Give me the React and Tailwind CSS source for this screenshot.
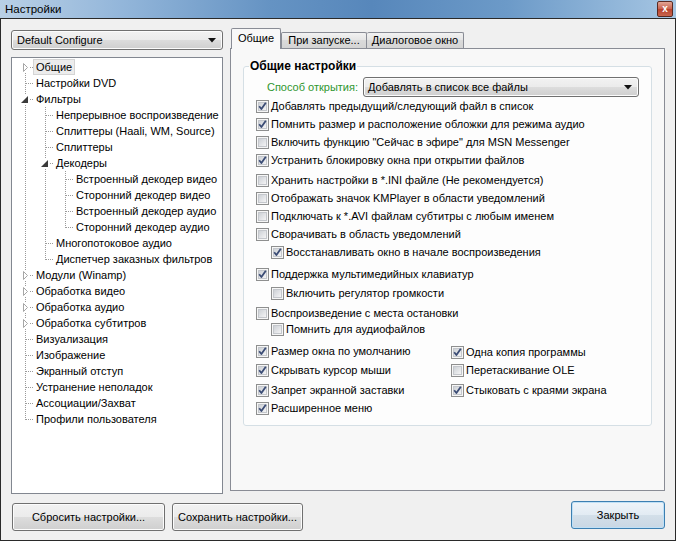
import React from 'react';

const tree = [
  { t: 'Общие', g: [], o: 'first', e: 'c', sel: true },
  { t: 'Настройки DVD', g: [], o: 'tee' },
  { t: 'Фильтры', g: [], o: 'tee', e: 'o' },
  { t: 'Непрерывное воспроизведение', g: ['pipe'], o: 'tee' },
  { t: 'Сплиттеры (Haali, WM, Source)', g: ['pipe'], o: 'tee' },
  { t: 'Сплиттеры', g: ['pipe'], o: 'tee' },
  { t: 'Декодеры', g: ['pipe'], o: 'tee', e: 'o' },
  { t: 'Встроенный декодер видео', g: ['pipe', 'pipe'], o: 'tee' },
  { t: 'Сторонний декодер видео', g: ['pipe', 'pipe'], o: 'tee' },
  { t: 'Встроенный декодер аудио', g: ['pipe', 'pipe'], o: 'tee' },
  { t: 'Сторонний декодер аудио', g: ['pipe', 'pipe'], o: 'elbow' },
  { t: 'Многопотоковое аудио', g: ['pipe'], o: 'tee' },
  { t: 'Диспетчер заказных фильтров', g: ['pipe'], o: 'elbow' },
  { t: 'Модули (Winamp)', g: [], o: 'tee', e: 'c' },
  { t: 'Обработка видео', g: [], o: 'tee', e: 'c' },
  { t: 'Обработка аудио', g: [], o: 'tee', e: 'c' },
  { t: 'Обработка субтитров', g: [], o: 'tee', e: 'c' },
  { t: 'Визуализация', g: [], o: 'tee' },
  { t: 'Изображение', g: [], o: 'tee' },
  { t: 'Экранный отступ', g: [], o: 'tee' },
  { t: 'Устранение неполадок', g: [], o: 'tee' },
  { t: 'Ассоциации/Захват', g: [], o: 'tee' },
  { t: 'Профили пользователя', g: [], o: 'elbow' },
];

const dot = { stroke: '#9a9a9a', strokeWidth: 1, strokeDasharray: '1 1' };

function Cell({ type, exp }) {
  return (
    <svg width="20" height="16" viewBox="0 0 20 16" className="shrink-0">
      {type === 'pipe' && <line x1="12.5" y1="0" x2="12.5" y2="16" style={dot} />}
      {type === 'tee' && <line x1="12.5" y1="0" x2="12.5" y2="16" style={dot} />}
      {type === 'elbow' && <line x1="12.5" y1="0" x2="12.5" y2="9" style={dot} />}
      {type === 'first' && <line x1="12.5" y1="8" x2="12.5" y2="16" style={dot} />}
      {type !== 'pipe' && <line x1="13" y1="8.5" x2="20" y2="8.5" style={dot} />}
      {exp && <rect x="8" y="3" width="9" height="11" fill="#ffffff" />}
      {exp === 'c' && (
        <polygon points="10.5,4.5 10.5,12.5 14.5,8.5" fill="#ffffff" stroke="#a6a6a6" strokeWidth="1" />
      )}
      {exp === 'o' && <polygon points="15,5 15,12 8,12" fill="#3a3a3a" />}
    </svg>
  );
}

function Check({ checked }) {
  return (
    <span className="relative flex h-[13px] w-[13px] shrink-0 items-center justify-center border border-[#8e8f8f] bg-[#f6f6f6]">
      <span className="h-[9px] w-[9px] border border-[#c4c7cc] bg-[linear-gradient(135deg,#cdd1d6,#f4f4f5)]" />
      {checked && (
        <svg className="absolute left-[-1px] top-[-1px]" width="13" height="13" viewBox="0 0 13 13">
          <path d="M3.2 6.3 L5.4 9 L9.8 2.8" fill="none" stroke="#3b4c75" strokeWidth="1.8" strokeLinejoin="round" />
        </svg>
      )}
    </span>
  );
}

function Row({ checked, label, className = '' }) {
  return (
    <div className={'flex items-center gap-[2px] whitespace-nowrap ' + className}>
      <Check checked={checked} />
      <span className="leading-none">{label}</span>
    </div>
  );
}

function Arrow() {
  return (
    <svg width="8" height="5" viewBox="0 0 8 5" className="shrink-0">
      <polygon points="0,0 8,0 4,4.5" fill="#111111" />
    </svg>
  );
}

const btn =
  'rounded-[3px] border border-[#707070] bg-[linear-gradient(#f2f2f2,#ebebeb_50%,#dddddd_50%,#cfcfcf)] shadow-[inset_0_0_0_1px_#fcfcfc]';

const tab =
  'flex h-[16px] items-center justify-center whitespace-nowrap rounded-t-[2px] border border-b-0 border-[#898c95] bg-[linear-gradient(#f2f2f2,#e4e4e4_50%,#dadada_50%,#d4d4d4)] leading-none';

export default function App() {
  return (
    <div className="flex h-[541px] w-[676px] flex-col overflow-hidden bg-[#f0f0f0] font-['Liberation_Sans',Arial,sans-serif] text-[11px] text-black">
      {/* title bar */}
      <div className="flex h-[18px] shrink-0 items-start bg-[linear-gradient(90deg,#b9d0e6_0%,#93b6da_18%,#6593c3_40%,#5787bb_55%,#6c9ac8_75%,#a6c6e3_100%)]">
        <span className="ml-[5px] mt-[2px] text-[11.5px] leading-[14px]">Настройки</span>
        <div className="ml-auto mr-[3px] mt-[1px] flex h-[16px] w-[16px] items-center justify-center rounded-[2px] border border-[#5a2a22] bg-[linear-gradient(#e2a696,#c8604c_50%,#b8402c_50%,#c8664e)] text-[10px] font-bold leading-none text-white">
          x
        </div>
      </div>

      {/* body */}
      <div className="flex flex-1 flex-col border border-[#2a2a2a] px-[10px] pt-[10px]">
        <div className="flex h-[465px] gap-[7px]">
          {/* left column */}
          <div className="flex w-[212px] flex-col">
            <div className={'mt-[1px] flex h-[20px] items-center justify-between pl-[5px] pr-[6px] ' + btn}>
              <span className="whitespace-nowrap leading-none">Default Configure</span>
              <Arrow />
            </div>
            <div className="mt-[7px] h-[437px] border border-[#828790] bg-white pl-[1px] pt-[1px]">
              {tree.map((r, i) => (
                <div key={i} className="flex h-[16px] items-center">
                  {r.g.map((g, j) => (
                    <Cell key={j} type={g} />
                  ))}
                  <Cell type={r.o} exp={r.e} />
                  <span
                    className={
                      r.sel
                        ? 'flex h-[16px] items-center whitespace-nowrap border border-[#d4d4d4] bg-[#ececec] px-[2px] leading-none'
                        : 'flex h-[16px] items-center whitespace-nowrap px-[3px] leading-none'
                    }
                  >
                    {r.t}
                  </span>
                </div>
              ))}
            </div>
          </div>

          {/* right column */}
          <div className="flex w-[435px] flex-col">
            <div className="flex h-[19px] items-end pl-[1px]">
              <div className="relative -mb-px flex h-[21px] w-[50px] items-start justify-center whitespace-nowrap rounded-t-[2px] border border-b-0 border-[#898c95] bg-[#f8f8f8] pt-[4px] leading-none">
                Общие
              </div>
              <div className={'w-[86px] ' + tab}>При запуске...</div>
              <div className={'w-[97px] border-l-0 ' + tab}>Диалоговое окно</div>
            </div>
            <div className="h-[443px] border border-[#898c95] bg-[#f8f8f8] px-[12px] pt-[10px]">
              <fieldset className="rounded-[3px] border border-[#d5dfe5] bg-[#fdfdfd] pb-[8px] pl-[5px] pr-[10px]">
                <legend className="h-[14px] whitespace-nowrap px-[1px] text-[12px] font-bold leading-[14px]">Общие настройки</legend>
                <div className="pl-[7px] pt-[4px]">
                  <div className="flex h-[20px] items-center">
                    <span className="w-[102px] whitespace-nowrap text-right leading-none text-[#2e962e]">Способ открытия:</span>
                    <div className={'ml-[5px] flex h-[20px] w-[276px] items-center justify-between pl-[4px] pr-[6px] ' + btn}>
                      <span className="whitespace-nowrap leading-none">Добавлять в список все файлы</span>
                      <Arrow />
                    </div>
                  </div>
                  <Row className="h-[18px]" checked label="Добавлять предыдущий/следующий файл в список" />
                  <Row className="h-[18px]" checked label="Помнить размер и расположение обложки для режима аудио" />
                  <Row className="h-[18px]" label={'Включить функцию "Сейчас в эфире" для MSN Messenger'} />
                  <Row className="h-[18px]" checked label="Устранить блокировку окна при открытии файлов" />
                  <Row className="mt-[2px] h-[18px]" label="Хранить настройки в *.INI файле (Не рекомендуется)" />
                  <Row className="h-[18px]" label="Отображать значок KMPlayer в области уведомлений" />
                  <Row className="h-[18px]" label="Подключать к *.AVI файлам субтитры с любым именем" />
                  <Row className="h-[18px]" label="Сворачивать в область уведомлений" />
                  <Row className="ml-[15px] h-[18px]" checked label="Восстанавливать окно в начале воспроизведения" />
                  <Row className="mt-[4px] h-[18px]" checked label="Поддержка мультимедийных клавиатур" />
                  <Row className="ml-[15px] mt-[1px] h-[18px]" label="Включить регулятор громкости" />
                  <Row className="mt-[3px] h-[16px]" label="Воспроизведение с места остановки" />
                  <Row className="ml-[15px] h-[16px]" label="Помнить для аудиофайлов" />
                  <div className="mt-[5px] flex h-[18px]">
                    <Row className="w-[195px]" checked label="Размер окна по умолчанию" />
                    <Row className="mt-[2px]" checked label="Одна копия программы" />
                  </div>
                  <div className="mt-[1px] flex h-[18px]">
                    <Row className="w-[195px]" checked label="Скрывать курсор мыши" />
                    <Row label="Перетаскивание OLE" />
                  </div>
                  <div className="mt-[2px] flex h-[18px]">
                    <Row className="w-[195px]" checked label="Запрет экранной заставки" />
                    <Row checked label="Стыковать с краями экрана" />
                  </div>
                  <Row className="h-[18px]" checked label="Расширенное меню" />
                </div>
              </fieldset>
            </div>
          </div>
        </div>

        {/* bottom buttons */}
        <div className="mt-[7px] flex items-start">
          <div className={'ml-[1px] mt-[2px] flex h-[28px] w-[153px] items-center justify-center whitespace-nowrap leading-none ' + btn}>
            Сбросить настройки...
          </div>
          <div className={'ml-[7px] mt-[2px] flex h-[28px] w-[131px] items-center justify-center whitespace-nowrap leading-none ' + btn}>
            Сохранить настройки...
          </div>
          <div className="ml-auto flex h-[28px] w-[94px] items-center justify-center whitespace-nowrap rounded-[3px] border border-[#3c7fb1] bg-[linear-gradient(#eef4f9,#e2ebf3_50%,#d3dfe9_50%,#c9d7e4)] leading-none shadow-[inset_0_0_0_1px_#bfe0f6]">
            Закрыть
          </div>
        </div>
      </div>
    </div>
  );
}
